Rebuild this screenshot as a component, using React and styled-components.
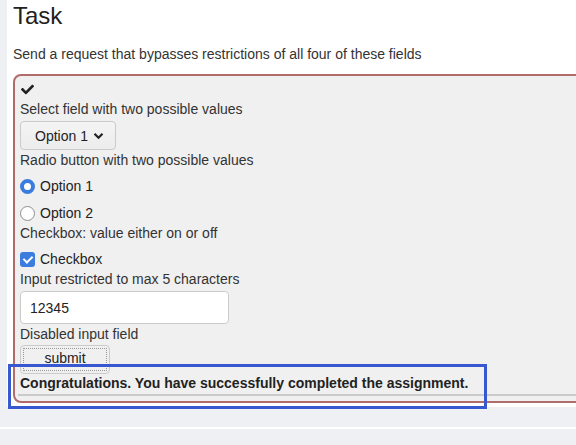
import React from "react";
import styled, { createGlobalStyle } from "styled-components";
import { FaCheck } from "react-icons/fa";

const Global = createGlobalStyle`
  html, body { margin: 0; padding: 0; background: #eef0f4; overflow: hidden; }
  body { font-family: "Liberation Sans", Arial, Helvetica, sans-serif; font-size: 14px; line-height: 20px; color: #333; }
`;

const Page = styled.div`
  width: 576px;
  height: 445px;
  position: relative;
  overflow: hidden;
`;

const Panel = styled.div`
  margin-left: 7px;
  width: 620px;
  height: 407px;
  background: #fff;
  padding: 3px 0 0 6px;
  box-sizing: border-box;
`;

const Title = styled.h2`
  margin: 0;
  font-size: 24px;
  line-height: 26px;
  font-weight: 400;
  color: #222;
`;

const Lead = styled.p`
  margin: 15px 0 10px;
`;

const Form = styled.form`
  width: 600px;
  border: 2px solid #b06b6b;
  border-radius: 8px;
  background: #f0f0f0;
  padding: 3px 0 5px 5px;
  box-sizing: border-box;
  display: flex;
  flex-direction: column;
  align-items: flex-start;
`;

const CheckLine = styled.div`
  height: 20px;
  display: flex;
  align-items: center;
  color: #222;
  font-size: 13px;
  padding-left: 1px;
`;

const Label = styled.div``;

const SelectBox = styled.button`
  margin-top: 2px;
  height: 29px;
  width: 96px;
  border: 1px solid #cdcbc8;
  border-radius: 4px;
  background: linear-gradient(#f4f4f4, #ececec);
  font: inherit;
  color: #222;
  display: flex;
  align-items: center;
  gap: 5px;
  padding: 0 0 0 14px;
  box-sizing: border-box;
`;

const Choice = styled.label`
  margin-top: ${(p) => p.$gap}px;
  display: flex;
  align-items: center;
  height: 20px;
  color: #222;
`;

const Radio = styled.input.attrs({ type: "radio" })`
  appearance: none;
  margin: 0 5px 0 0;
  width: 15px;
  height: 15px;
  border-radius: 50%;
  box-sizing: border-box;
  border: 1px solid #8f8f8f;
  background: #fff;
  &:checked {
    border: 4px solid #3b7ddf;
  }
`;

const Check = styled.input.attrs({ type: "checkbox" })`
  appearance: none;
  position: relative;
  margin: 0 5px 0 0;
  width: 15px;
  height: 15px;
  border-radius: 3px;
  box-sizing: border-box;
  border: 1px solid #8f8f8f;
  background: #fff;
  &:checked {
    border: none;
    background: #3b7ddf;
  }
  &:checked::after {
    content: "";
    position: absolute;
    left: 5px;
    top: 2px;
    width: 4px;
    height: 7px;
    border: solid #fff;
    border-width: 0 2px 2px 0;
    transform: rotate(45deg);
  }
`;

const TextInput = styled.input`
  margin-top: 2px;
  width: 209px;
  height: 33px;
  box-sizing: border-box;
  border: 1px solid #cdcbc8;
  border-radius: 4px;
  background: #fff;
  font: inherit;
  color: #222;
  padding: 0 9px;
`;

const Submit = styled.button`
  margin-top: 1px;
  width: 90px;
  height: 29px;
  border: 1px solid #cdcbc8;
  border-radius: 4px;
  background: #f0f0f0;
  font: inherit;
  color: #222;
  padding: 2px;
  box-sizing: border-box;
`;

const FocusRing = styled.span`
  display: block;
  height: 100%;
  border: 1px dotted #999;
  box-sizing: border-box;
  line-height: 19px;
`;

const Feedback = styled.div`
  margin-top: -1px;
  font-weight: 700;
  color: #222;
`;

const Rule = styled.div`
  align-self: stretch;
  margin: 1px 0 0 -2px;
  height: 2px;
  background: #cbcbcb;
`;

const Footer = styled.div`
  margin-top: 20px;
  border-top: 2px solid #fff;
`;

const Highlight = styled.div`
  position: absolute;
  left: 8px;
  top: 364px;
  width: 479px;
  height: 45px;
  border: 3px solid #3758d1;
  box-sizing: border-box;
  pointer-events: none;
`;

export default function App() {
  return (
    <Page>
      <Global />
      <Panel>
        <Title>Task</Title>
        <Lead>Send a request that bypasses restrictions of all four of these fields</Lead>
        <Form onSubmit={(e) => e.preventDefault()}>
          <CheckLine>
            <FaCheck />
          </CheckLine>
          <Label>Select field with two possible values</Label>
          <SelectBox type="button">
            Option 1
            <svg width="11" height="8" viewBox="0 0 11 8" fill="none">
              <path d="M1.5 1.8 5.5 5.8 9.5 1.8" stroke="#222" strokeWidth="2.2" />
            </svg>
          </SelectBox>
          <Label>Radio button with two possible values</Label>
          <Choice $gap={6}>
            <Radio name="r" defaultChecked />
            Option 1
          </Choice>
          <Choice $gap={7}>
            <Radio name="r" />
            Option 2
          </Choice>
          <Label>Checkbox: value either on or off</Label>
          <Choice $gap={6}>
            <Check defaultChecked />
            Checkbox
          </Choice>
          <Label>Input restricted to max 5 characters</Label>
          <TextInput defaultValue="12345" maxLength={5} />
          <Label>Disabled input field</Label>
          <Submit type="submit">
            <FocusRing>submit</FocusRing>
          </Submit>
          <Feedback>Congratulations. You have successfully completed the assignment.</Feedback>
          <Rule />
        </Form>
      </Panel>
      <Footer />
      <Highlight />
    </Page>
  );
}
